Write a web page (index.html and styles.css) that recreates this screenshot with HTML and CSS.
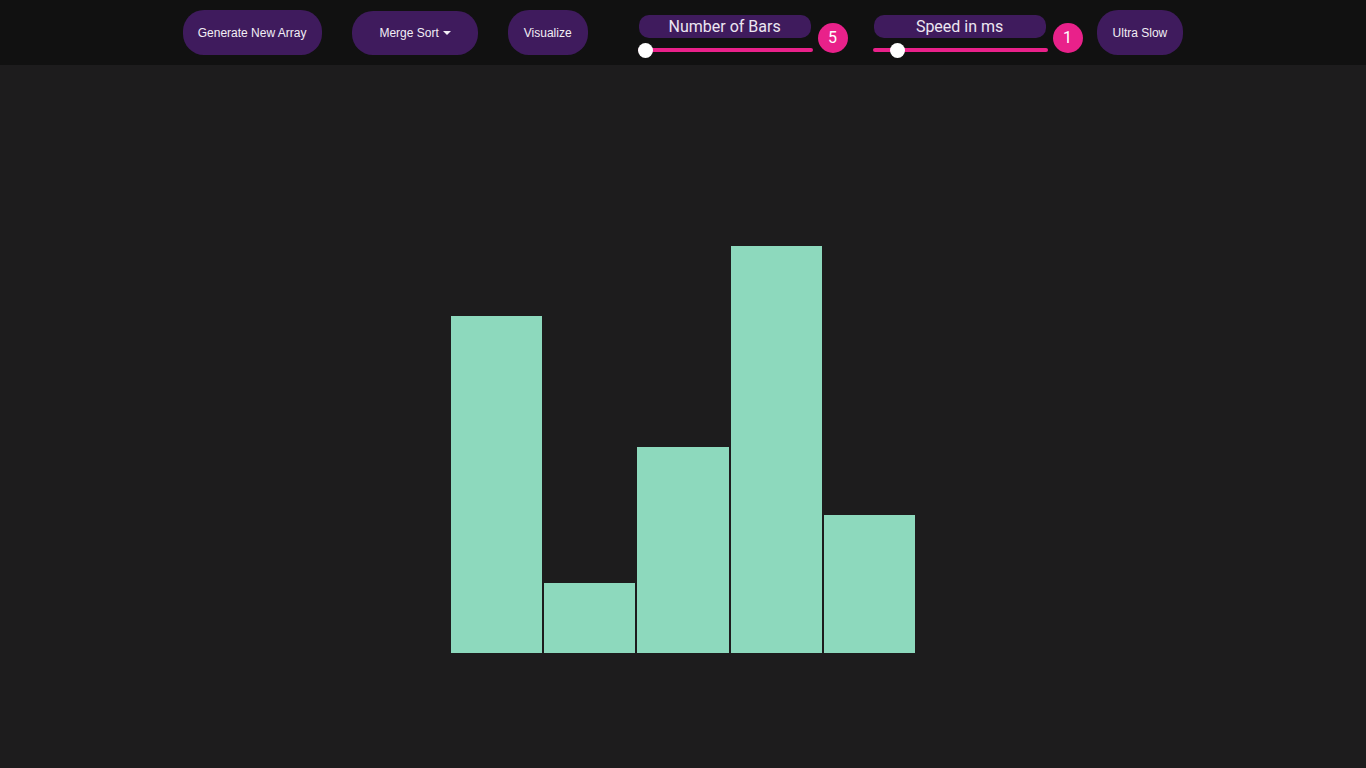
FILE: index.html
```html
<!DOCTYPE html>
<html lang="en">
<head>
<meta charset="utf-8">
<title>Sorting Visualizer</title>
<link rel="stylesheet" href="styles.css">
</head>
<body>
<header class="toolbar">
  <button class="btn btn-generate">Generate New Array</button>
  <button class="btn btn-algo">Merge Sort <span class="caret"></span></button>
  <button class="btn btn-visualize">Visualize</button>
  <div class="control control-bars">
    <div class="slider-col">
      <div class="pill">Number of Bars</div>
      <input class="range" type="range" min="0" max="100" value="0">
    </div>
    <div class="badge">5</div>
  </div>
  <div class="control control-speed">
    <div class="slider-col">
      <div class="pill">Speed in ms</div>
      <input class="range" type="range" min="0" max="1000" value="106">
    </div>
    <div class="badge">1</div>
  </div>
  <button class="btn btn-speed">Ultra Slow</button>
</header>
<main class="chart">
  <div class="bar" style="height:336.5px"></div>
  <div class="bar" style="height:69.5px"></div>
  <div class="bar" style="height:205.5px"></div>
  <div class="bar" style="height:406.5px"></div>
  <div class="bar" style="height:137.5px"></div>
</main>
</body>
</html>
```
FILE: styles.css
```css
* { box-sizing: border-box; }
html, body { margin: 0; padding: 0; }
body {
  background: #1d1c1d;
  font-family: "Liberation Sans", Arial, sans-serif;
  height: 768px;
  overflow: hidden;
}
.toolbar {
  height: 65px;
  background: #111111;
  display: flex;
  align-items: flex-start;
  justify-content: center;
}
.btn {
  height: 45px;
  margin-top: 10px;
  border: none;
  border-radius: 21px;
  background: #3f1b5d;
  color: #f2eef5;
  font-family: "Liberation Sans", Arial, sans-serif;
  font-size: 12px;
  padding: 0 16px;
  cursor: pointer;
}
.btn-generate { padding: 0 16px 0 15px; }
.btn-algo {
  margin-left: 30px;
  padding: 0 27px;
  height: 44px;
  margin-top: 11px;
  display: flex;
  align-items: center;
}
.caret {
  display: inline-block;
  margin-left: 4px;
  width: 0;
  height: 0;
  border-left: 4px solid transparent;
  border-right: 4px solid transparent;
  border-top: 4px solid #f2eef5;
}
.btn-visualize { margin-left: 30px; }
.control {
  display: flex;
  align-items: flex-start;
}
.control-bars { margin-left: 50px; }
.control-speed { margin-left: 25px; }
.btn-speed { margin-left: 14px; }
.slider-col {
  width: 175px;
  display: flex;
  flex-direction: column;
  align-items: flex-start;
  padding-top: 15px;
}
.pill {
  width: 172px;
  height: 23px;
  margin-left: 1px;
  border-radius: 10px;
  background: #3f1b5d;
  color: #ece6f1;
  font-family: Roboto, "Liberation Sans", sans-serif;
  font-size: 16px;
  line-height: 23px;
  text-align: center;
}
.range {
  -webkit-appearance: none;
  appearance: none;
  width: 175px;
  height: 4px;
  margin: 10px 0 0 0;
  border-radius: 2px;
  background: #e9218a;
  outline: none;
}
.range::-webkit-slider-thumb {
  -webkit-appearance: none;
  appearance: none;
  width: 15px;
  height: 15px;
  border-radius: 50%;
  background: #ffffff;
  border: none;
}
.badge {
  width: 30px;
  height: 30px;
  margin-top: 23px;
  margin-left: 5px;
  border-radius: 50%;
  background: #e9218a;
  color: #ffffff;
  font-family: Roboto, "Liberation Sans", sans-serif;
  font-size: 16px;
  line-height: 30px;
  text-align: center;
}
.chart {
  height: 703px;
  padding-bottom: 115.5px;
  display: flex;
  justify-content: center;
  align-items: flex-end;
}
.bar {
  width: 91.2px;
  margin: 0 1px;
  background: #8dd9bd;
}
```
